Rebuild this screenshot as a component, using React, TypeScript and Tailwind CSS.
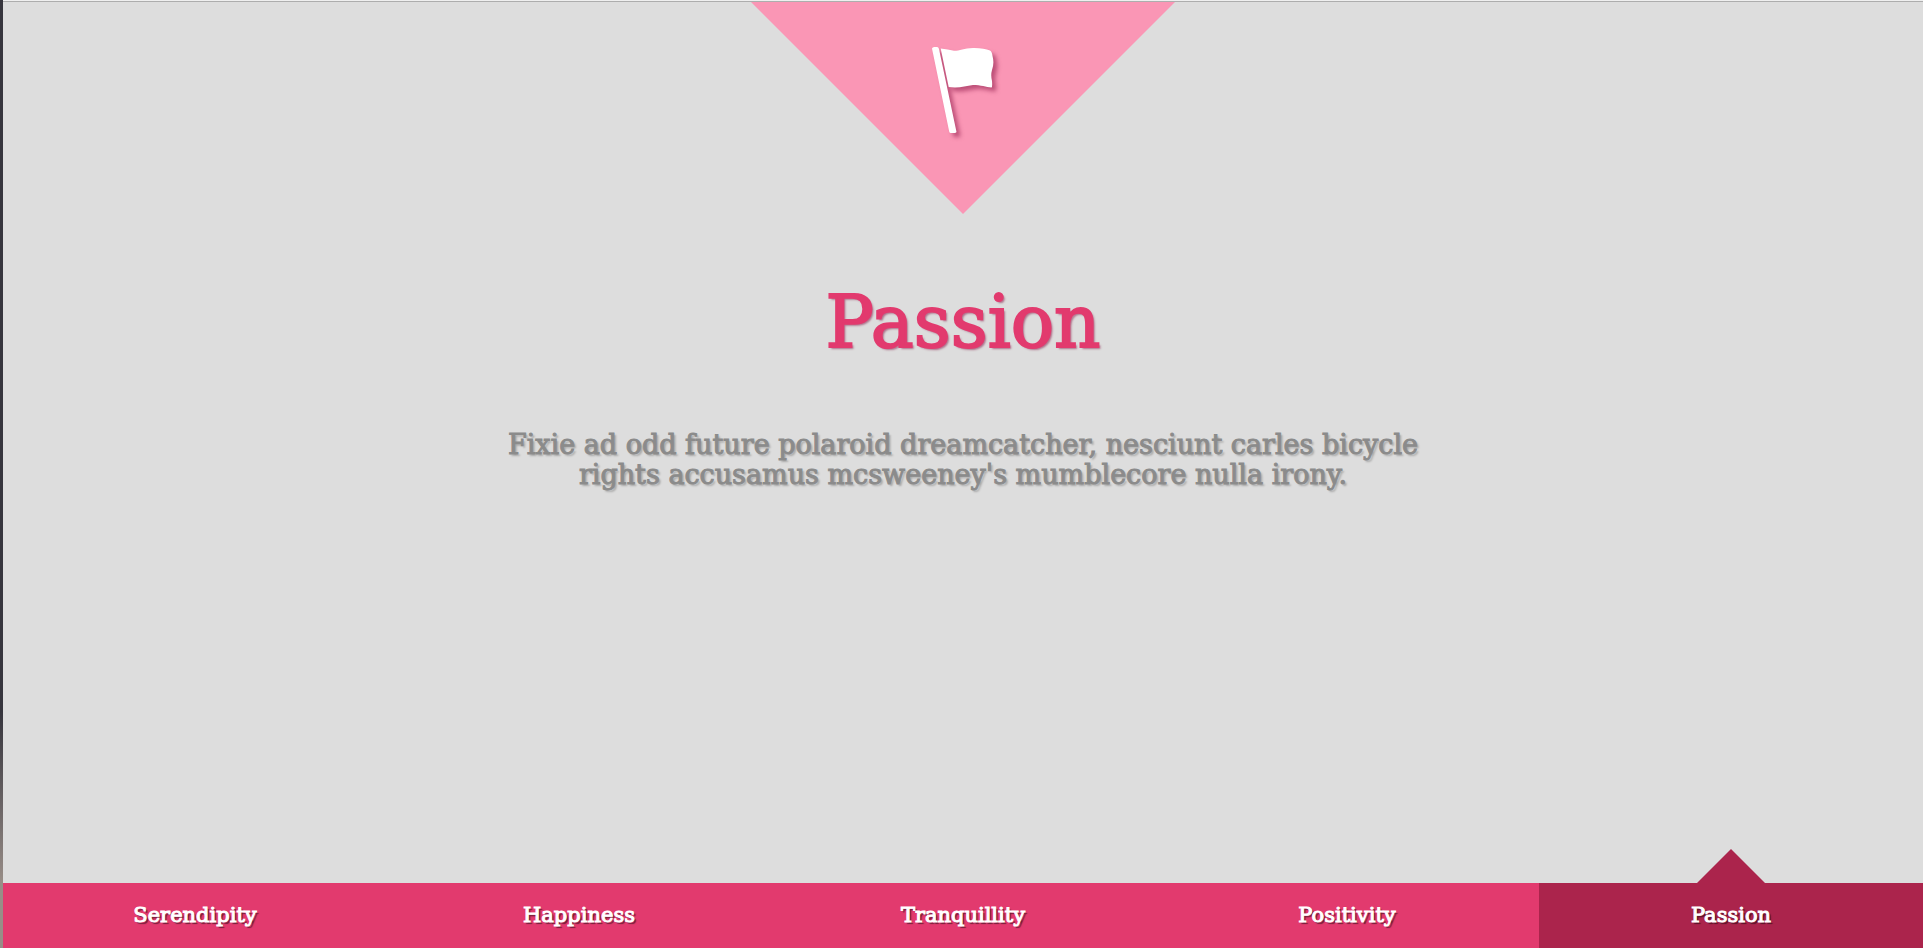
const sections = ['Serendipity', 'Happiness', 'Tranquillity', 'Positivity', 'Passion'];
const current = 'Passion';

function FlagIcon() {
  return (
    <svg
      viewBox="0 0 62 86"
      className="h-[86px] w-[62px] overflow-visible fill-white drop-shadow-[4px_4px_2px_rgba(130,10,60,0.5)]"
      aria-hidden="true"
    >
      <path d="M0 1.500Q0 0.500 2 0H5Q6.500 0 7 2L24.500 85Q24 86 22.500 86H19Q17.500 86 17.200 84.500Z" />
      <path d="M8.700 1.500Q16 2.500 22 3.800C27 4 32 1.200 41 0.900C48 0.700 54 2 58 3.500Q60 4.500 60.500 9Q62.500 16 60 23Q58.500 28 60 34Q60.500 40 59.500 40.500C54 40 49 38 41 38C33 39 27 41.500 16.700 40Z" />
    </svg>
  );
}

function Panel() {
  return (
    <section className="flex flex-1 flex-col items-center text-center">
      <div className="flex h-[212px] w-[424px] justify-center bg-[#fa96b5] pt-[45px] [clip-path:polygon(0_0,100%_0,50%_100%)]">
        <FlagIcon />
      </div>
      <h2 className="mt-[66px] text-[72px] leading-[84px] font-normal text-[#e23a6e] [-webkit-text-stroke:2px_#e23a6e] [text-shadow:2px_2px_2px_rgba(130,10,60,0.5)]">
        Passion
      </h2>
      <p className="mt-[66px] w-1/2 text-[27px] leading-[30px] text-[#8b8b8b] [-webkit-text-stroke:1px_#8b8b8b] [text-shadow:2px_2px_2px_rgba(0,0,0,0.25)]">
        Fixie ad odd future polaroid dreamcatcher, nesciunt carles bicycle rights accusamus
        mcsweeney's mumblecore nulla irony.
      </p>
    </section>
  );
}

function SectionNav() {
  return (
    <nav className="grid grid-cols-5 bg-[#e23a6e]">
      {sections.map((name) => (
        <a
          key={name}
          href={`#${name.toLowerCase()}`}
          aria-current={name === current ? 'page' : undefined}
          className="relative block text-center text-[21px] leading-[65px] text-white [-webkit-text-stroke:1px_white] [text-shadow:2px_2px_1px_rgba(0,0,0,0.5)] aria-[current=page]:bg-[#ab244c]"
        >
          {name === current && (
            <span className="absolute bottom-full left-1/2 h-[34px] w-[68px] -translate-x-1/2 bg-[#ab244c] [clip-path:polygon(50%_0,100%_100%,0_100%)]" />
          )}
          {name}
        </a>
      ))}
    </nav>
  );
}

export default function App() {
  return (
    <div className="flex min-h-screen bg-[#dddddd] font-['DejaVu_Serif',serif]">
      <div className="w-[3px] bg-linear-to-b from-[#36353d] from-75% to-[#988d87] to-93%" />
      <main className="flex flex-1 flex-col">
        <div className="h-[2px] border-b border-[#adadad] bg-[#efefef]" />
        <Panel />
        <SectionNav />
      </main>
    </div>
  );
}
